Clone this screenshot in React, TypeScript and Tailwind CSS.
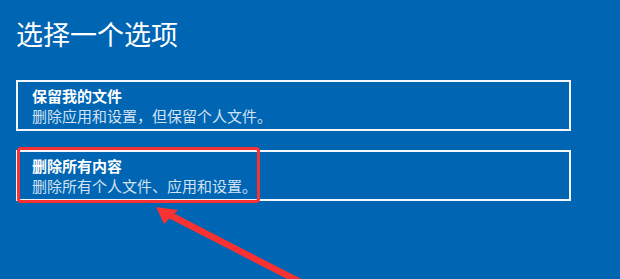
import React from "react";

const Option = ({ title, desc }: { title: string; desc: string }) => (
  <div className="border-2 border-[#f4f8fc] pl-[14px] pt-[4px] pb-[3px]">
    <div className="text-[15px] leading-[20px] font-bold text-white">{title}</div>
    <div className="text-[15px] leading-[20px] text-[#d2e2f2]">{desc}</div>
  </div>
);

export default function App() {
  return (
    <div
      className="relative w-[620px] h-[279px] overflow-hidden bg-[#0065b3] pl-4 pt-4"
      style={{ fontFamily: '"Noto Sans CJK SC", "Noto Sans", sans-serif' }}
    >
      <h1 className="text-[27px] leading-[36px] font-normal text-white mb-[28px]">选择一个选项</h1>
      <div className="flex flex-col gap-[19px] w-[555px]">
        <Option title="保留我的文件" desc="删除应用和设置，但保留个人文件。" />
        <Option title="删除所有内容" desc="删除所有个人文件、应用和设置。" />
      </div>
      <div className="absolute left-[17px] top-[147px] w-[243px] h-[56px] border-[3px] border-[#f83232] rounded-[4px]" />
      <svg className="absolute left-0 top-0 pointer-events-none" width="620" height="279" viewBox="0 0 620 279">
        <polygon points="156,207 178,210 164,224" fill="#f83232" />
        <line x1="166" y1="213" x2="302" y2="283" stroke="#f83232" strokeWidth="6.5" />
      </svg>
    </div>
  );
}
